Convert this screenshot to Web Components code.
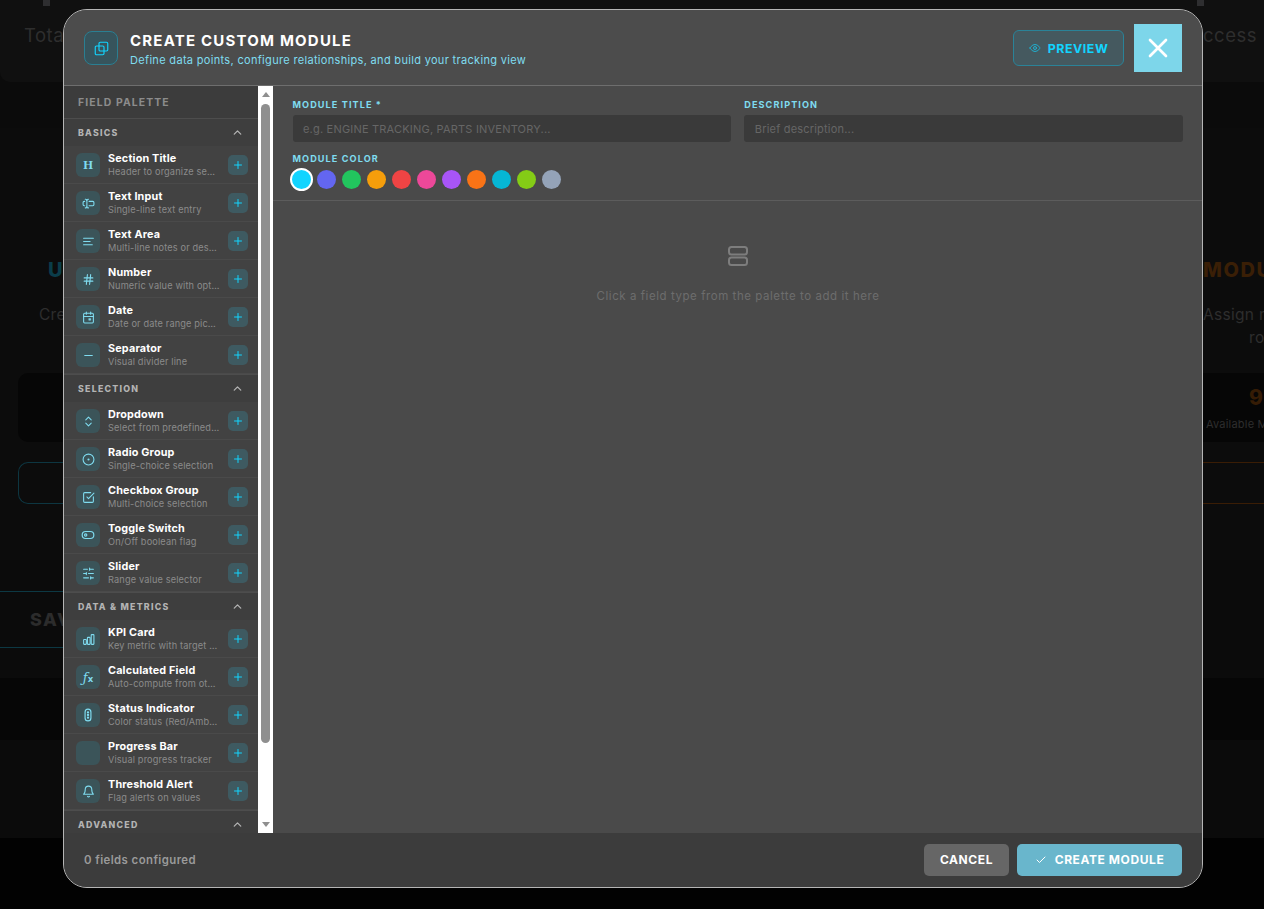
<!DOCTYPE html>
<html lang="en"><head><meta charset="utf-8"><title>Create Custom Module</title>
<style>
html,body{margin:0;height:100%;background:#0b0b0b;font-family:Inter,"Liberation Sans",sans-serif;overflow:hidden}
</style></head><body>
<x-app></x-app>
<script>
const ic=(inner,size=13,sw=2)=>`<svg width="${size}" height="${size}" viewBox="0 0 24 24" fill="none" stroke="currentColor" stroke-width="${sw}" stroke-linecap="round" stroke-linejoin="round">${inner}</svg>`;
const ICONS={
 heading:`<span style="font:700 12.5px 'Liberation Serif',serif;line-height:1">H</span>`,
 input:ic('<path d="M12 20h-1a2 2 0 0 1-2-2 2 2 0 0 1-2 2H6"/><path d="M13 8h7a2 2 0 0 1 2 2v4a2 2 0 0 1-2 2h-7"/><path d="M5 16H4a2 2 0 0 1-2-2v-4a2 2 0 0 1 2-2h1"/><path d="M6 4h1a2 2 0 0 1 2 2 2 2 0 0 1 2-2h1"/><path d="M9 6v12"/>'),
 area:ic('<path d="M21 6H3"/><path d="M15 12H3"/><path d="M19 18H3"/>'),
 hash:ic('<line x1="4" x2="20" y1="9" y2="9"/><line x1="4" x2="20" y1="15" y2="15"/><line x1="10" x2="8" y1="3" y2="21"/><line x1="16" x2="14" y1="3" y2="21"/>'),
 date:ic('<path d="M8 2v4M16 2v4"/><rect x="3" y="4" width="18" height="18" rx="2"/><path d="M3 10h18"/><rect x="13" y="14" width="3" height="3" fill="currentColor" stroke-width="1"/>'),
 minus:ic('<path d="M5 12h14"/>'),
 updown:ic('<path d="m7 15 5 5 5-5"/><path d="m7 9 5-5 5 5"/>'),
 radio:ic('<circle cx="12" cy="12" r="10"/><circle cx="12" cy="12" r="1"/>'),
 check:ic('<path d="M21 10.5V19a2 2 0 0 1-2 2H5a2 2 0 0 1-2-2V5a2 2 0 0 1 2-2h11"/><path d="m9 11 3 3L22 4"/>'),
 toggle:ic('<rect x="2" y="6" width="20" height="12" rx="6"/><circle cx="8" cy="12" r="2"/>',14),
 slider:ic('<path d="M21 4h-7M10 4H3M21 12h-9M8 12H3M21 20h-5M12 20H3"/><path d="M14 2v4M8 10v4M16 18v4"/>'),
 kpi:ic('<rect x="3" y="12" width="5" height="9" rx="1"/><rect x="10" y="8" width="5" height="13" rx="1"/><rect x="17" y="3" width="5" height="18" rx="1"/>'),
 fx:`<span style="font:italic 400 13px 'DejaVu Serif',serif;line-height:1;letter-spacing:0">ƒ<span style="font-size:8.5px;font-style:normal;font-weight:700;font-family:'DejaVu Sans',sans-serif">x</span></span>`,
 status:ic('<rect x="7" y="2" width="10" height="20" rx="5"/><circle cx="12" cy="7.5" r="1"/><circle cx="12" cy="12" r="1"/><circle cx="12" cy="16.5" r="1"/>',14),
 none:'',
 bell:ic('<path d="M6 8a6 6 0 0 1 12 0c0 7 3 9 3 9H3s3-2 3-9"/><path d="M10.3 21a1.94 1.94 0 0 0 3.4 0"/>')
};
const SECTIONS=[
 ['BASICS',[['heading','Section Title','Header to organize sections'],['input','Text Input','Single-line text entry'],['area','Text Area','Multi-line notes or descriptions'],['hash','Number','Numeric value with optional unit'],['date','Date','Date or date range picker'],['minus','Separator','Visual divider line']]],
 ['SELECTION',[['updown','Dropdown','Select from predefined options'],['radio','Radio Group','Single-choice selection'],['check','Checkbox Group','Multi-choice selection'],['toggle','Toggle Switch','On/Off boolean flag'],['slider','Slider','Range value selector']]],
 ['DATA & METRICS',[['kpi','KPI Card','Key metric with target value'],['fx','Calculated Field','Auto-compute from other fields'],['status','Status Indicator','Color status (Red/Amber/Green)'],['none','Progress Bar','Visual progress tracker'],['bell','Threshold Alert','Flag alerts on values']]],
 ['ADVANCED',[]]
];
const define=(name,css,html,extra)=>{customElements.define(name,class extends HTMLElement{
  connectedCallback(){ if(this.shadowRoot) return; const r=this.attachShadow({mode:'open'}); r.innerHTML=`<style>${css}</style>`+(typeof html==='function'?html(this):html); extra&&extra(r,this);} });};

define('x-backdrop',`
 :host{display:grid;height:909px;grid-template-rows:82px 46px 432px 32px 56px 30px 62px 98px 71px;color:#2e2e2e;overflow:hidden}
 .row{display:flex;justify-content:space-between;overflow:hidden;white-space:nowrap;box-sizing:border-box}
 .l,.r{display:flex;flex-direction:column;box-sizing:border-box;overflow:hidden}
 .l{width:63px}.r{width:61px}
 .t{font-size:18.5px;line-height:24px;letter-spacing:.5px}
 .big{font-size:20px;font-weight:800;line-height:26px;letter-spacing:1.6px}
 .p{font-size:15.5px;line-height:20px;letter-spacing:.3px}
 .box{height:69px;background:#060606;border-radius:10px 0 0 10px;margin:0 0 0 18px}
 .rbox{height:69px;background:#060606}
 .btn{height:42px;margin:20px 0 0 18px;border:1px solid #0d3641;border-right:0;border-radius:10px 0 0 10px;box-sizing:border-box}
 .rbtn{height:42px;margin-top:20px;border:solid #3a1d05;border-width:1px 0;box-sizing:border-box}
 .nub{width:7px;height:6px;background:#2e2e30;flex:none}
`,`
 <div class="row" style="background:#101010;border-radius:0 0 0 10px">
   <div class="l" style="padding-left:43px;width:63px"><div class="nub"></div><span class="t" style="margin:17px 0 0 -19px">Total</span></div>
   <div class="r" style="width:67px"><div class="nub"></div><span class="t" style="margin:17px 0 0 6px">ccess Permissions</span></div>
 </div>
 <div class="row"></div>
 <div class="row" style="background:#0c0c0c">
  <div class="l">
   <span class="big" style="margin:129px 0 0 48px;color:#0b3d4a">USE</span>
   <span class="p" style="margin:22px 0 0 39px">Create</span>
   <div style="height:48px"></div>
   <div class="box"></div><div class="btn"></div>
  </div>
  <div class="r">
   <span class="big" style="margin-top:129px;color:#3a1f06">MODULES</span>
   <span class="p" style="margin-top:22px">Assign modules</span>
   <span class="p" style="margin:3px 0 0 46px">roles</span>
   <div class="rbox" style="margin-top:25px">
     <div style="font-size:21px;font-weight:800;color:#351c05;padding:12px 0 0 46px;line-height:26px">9</div>
     <div style="font-size:11px;padding:6px 0 0 3px;letter-spacing:.2px">Available Modules</div>
   </div>
   <div class="rbtn"></div>
  </div>
 </div>
 <div class="row"><div class="l" style="border-bottom:1px solid #0c3843"></div></div>
 <div class="row"><div class="l" style="padding:16px 0 0 30px;border-bottom:1px solid #0c3843"><span class="big" style="color:#2c2c2c;line-height:24px;font-size:18px">SAVE</span></div></div>
 <div class="row"></div>
 <div class="row" style="background:#060606"></div>
 <div class="row"></div>
 <div class="row" style="background:#020202"></div>
`);

define('x-icon-box',`:host{display:flex;align-items:center;justify-content:center;width:24px;height:24px;flex:none;border-radius:6px;background:#3b5459;color:#7fdcf0;margin-top:1px}`,`<slot></slot>`);

define('x-palette-item',`
 :host{display:flex;align-items:center;height:38px;box-sizing:border-box;padding:0 10px 0 12px;background:#424242;border-bottom:1px solid #4a4a4a;gap:8px}
 .t{flex:1;min-width:0;display:flex;flex-direction:column;margin-top:1px}
 .n{font-size:10.8px;font-weight:700;color:#fff;line-height:14px;white-space:nowrap;letter-spacing:.18px}
 .d{font-size:9.2px;color:#8b8b8b;line-height:12px;white-space:nowrap;overflow:hidden;text-overflow:ellipsis;letter-spacing:.15px}
 .p{width:20px;height:20px;flex:none;border-radius:5px;background:#3e5a61;color:#12d4ff;display:flex;align-items:center;justify-content:center;margin-top:1px}
`,el=>`<x-icon-box>${ICONS[el.getAttribute('icon')]}</x-icon-box>
 <div class="t"><span class="n">${el.getAttribute('name')}</span><span class="d">${el.getAttribute('desc')}</span></div>
 <div class="p">${ic('<path d="M5 12h14M12 5v14"/>',12,2)}</div>`);

define('x-palette-section',`
 :host{display:block}
 .h{display:flex;align-items:center;justify-content:space-between;height:28px;box-sizing:border-box;padding:0 14px;background:#3e3e3e;border-top:1px solid #4d4d4d;color:#b3b3b3}
 .h span{font-size:8.8px;font-weight:800;letter-spacing:1.25px}
 svg{display:block}
`,el=>`<div class="h"><span>${el.getAttribute('label')}</span>${ic('<path d="m6 15 6-6 6 6"/>',13,2.4)}</div><slot></slot>`);

define('x-scrollbar',`
 :host{display:flex;flex-direction:column;align-items:center;width:15px;flex:none;background:#fff;box-sizing:border-box;height:100%}
 .a{width:0;height:0;border-left:4px solid transparent;border-right:4px solid transparent}
 .u{border-bottom:5px solid #8f8f8f;margin:6px 0 7px}
 .th{width:9px;height:639px;background:#8f8f8f;border-radius:5px}
 .sp{flex:1}
 .d{border-top:5px solid #8f8f8f;margin-bottom:6px}
`,`<div class="a u"></div><div class="th"></div><div class="sp"></div><div class="a d"></div>`);

define('x-palette',`
 :host{display:flex;flex:none;width:209px;height:100%;overflow:hidden}
 .col{width:194px;flex:none;background:#3c3c3c;overflow:hidden;display:flex;flex-direction:column}
 .tt{height:32px;flex:none;box-sizing:border-box;display:flex;align-items:center;padding:0 14px;font-size:10.4px;font-weight:700;letter-spacing:1.12px;color:#8c8c8c}
`,`<div class="col"><div class="tt">FIELD PALETTE</div><slot></slot></div><x-scrollbar></x-scrollbar>`);

define('x-field',`
 :host{display:flex;flex-direction:column;min-width:0}
 label{font-size:9.1px;font-weight:700;letter-spacing:1.1px;color:#7fdcf0;line-height:12px;margin-bottom:4px}
 .i{height:27px;background:#3a3a3a;border-radius:3px;font-size:11px;color:#666;display:flex;align-items:center;padding-left:10.5px;white-space:nowrap;overflow:hidden;letter-spacing:.2px}
`,el=>`<label>${el.getAttribute('label')}</label><div class="i">${el.getAttribute('placeholder')}</div>`);

define('x-swatch',`:host{display:block;width:19px;height:19px;border-radius:50%;background:var(--c);box-sizing:border-box;flex:none}
 :host([selected]){width:23px;height:23px;border:2px solid #fff;margin:-2px}`,``);

define('x-module-form',`
 :host{display:block;flex:none;height:115px;box-sizing:border-box;padding:13px 19px 0 19.5px;border-bottom:1px solid #5c5c5c}
 .g{display:grid;grid-template-columns:1fr 1fr;gap:13px}
 label{display:block;font-size:9.1px;font-weight:700;letter-spacing:1.1px;color:#7fdcf0;line-height:12px;margin:11px 0 5px}
 .s{display:flex;gap:6px;align-items:center;margin-left:-.8px}
`,`<div class="g"><x-field label="MODULE TITLE *" placeholder="e.g. ENGINE TRACKING, PARTS INVENTORY..."></x-field><x-field label="DESCRIPTION" placeholder="Brief description..."></x-field></div>
 <label>MODULE COLOR</label>
 <div class="s">${['#12d4ff','#6366f1','#22c55e','#f59e0b','#ef4444','#ec4899','#a855f7','#f97316','#06b6d4','#84cc16','#94a3b8'].map((c,i)=>`<x-swatch style="--c:${c}" ${i?'':'selected'}></x-swatch>`).join('')}</div>`);

define('x-empty-state',`
 :host{display:flex;flex-direction:column;align-items:center;flex:1;padding-top:43px;color:#6d6d6d;margin-left:1px}
 svg{display:block;color:#7d7d7d}
 p{margin:21px 0 0;font-size:11.5px;line-height:14px;letter-spacing:.56px}
`,`${ic('<rect x="3" y="3" width="18" height="7.5" rx="2.5"/><rect x="3" y="13.5" width="18" height="7.5" rx="2.5"/>',24,2)}<p>Click a field type from the palette to add it here</p>`);

define('x-btn',`
 :host{display:inline-flex;align-items:center;justify-content:center;box-sizing:border-box;height:32px;border-radius:5px;font-size:12px;font-weight:700;color:#fff;letter-spacing:.58px;white-space:nowrap;gap:8px;background:var(--b,#666);padding-bottom:1px}
`,`<slot></slot>`);

define('x-modal-header',`
 :host{display:flex;align-items:center;height:76px;flex:none;box-sizing:border-box;padding:1px 20px 0 20px;background:#4c4c4c;border-bottom:1px solid #6e6e6e}
 .ib{width:34px;height:34px;box-sizing:border-box;border:1px solid #2a7f92;border-radius:8px;background:#37545c;color:#12d4ff;display:flex;align-items:center;justify-content:center;flex:none}
 .tx{margin-left:12px;flex:1;display:flex;flex-direction:column;padding-top:2px}
 h1{margin:0;font-size:15px;font-weight:700;color:#fff;letter-spacing:1.2px;line-height:18px}
 p{margin:3px 0 0;font-size:11px;line-height:14px;color:#7fdcf0;letter-spacing:.32px}
 .pv{display:flex;align-items:center;justify-content:center;gap:7px;width:111px;height:36px;box-sizing:border-box;border:1px solid #2a8398;border-radius:6px;background:#45595f;color:#12d4ff;font-size:12.4px;font-weight:700;letter-spacing:.55px}
 .pv svg{opacity:.7}
 .x{width:48px;height:48px;margin-left:10px;background:#7dd6ea;color:#fff;display:flex;align-items:center;justify-content:center}
`,`<div class="ib">${ic('<rect x="8" y="2" width="14" height="14" rx="2"/><rect x="2" y="8" width="14" height="14" rx="2"/>',15,1.8)}</div>
 <div class="tx"><h1>CREATE CUSTOM MODULE</h1><p>Define data points, configure relationships, and build your tracking view</p></div>
 <div class="pv">${ic('<path d="M2 12s3.5-7 10-7 10 7 10 7-3.5 7-10 7-10-7-10-7Z"/><circle cx="12" cy="12" r="3"/>',12,2)}<span>PREVIEW</span></div>
 <div class="x">${ic('<path d="M18 6 6 18M6 6l12 12"/>',32,2)}</div>`);

define('x-modal-footer',`
 :host{display:flex;align-items:center;height:54px;flex:none;box-sizing:border-box;padding:0 20px;background:#3c3c3c;gap:8px}
 .c{flex:1;font-size:11.4px;font-weight:600;color:#9a9a9a;letter-spacing:.42px}
`,`<span class="c">0 fields configured</span>
 <x-btn style="width:85px;--b:#666">CANCEL</x-btn>
 <x-btn style="width:165px;--b:#69b6cc">${ic('<path d="M20 6 9 17l-5-5"/>',12,2)}<span>CREATE MODULE</span></x-btn>`);

define('x-modal',`
 :host{display:flex;flex-direction:column;width:1140px;height:879px;box-sizing:border-box;border:1px solid #b5b5b5;border-radius:24px;background:#4a4a4a;overflow:hidden}
 .b{display:flex;flex:1;min-height:0}
 .m{flex:1;display:flex;flex-direction:column;min-width:0}
`,`<x-modal-header></x-modal-header>
 <div class="b"><x-palette>${SECTIONS.map(([l,it])=>`<x-palette-section label="${l.replace('&','&amp;')}">${it.map(([i,n,d])=>`<x-palette-item icon="${i}" name="${n}" desc="${d}"></x-palette-item>`).join('')}</x-palette-section>`).join('')}</x-palette>
 <div class="m"><x-module-form></x-module-form><x-empty-state></x-empty-state></div></div>
 <x-modal-footer></x-modal-footer>`);

define('x-app',`
 :host{display:block;position:relative;height:909px;overflow:hidden}
 .ov{position:absolute;inset:0;display:flex;justify-content:flex-start;align-items:flex-start;padding:9px 0 0 63px;box-sizing:border-box}
`,`<x-backdrop></x-backdrop><div class="ov"><x-modal></x-modal></div>`);
</script>
</body></html>
